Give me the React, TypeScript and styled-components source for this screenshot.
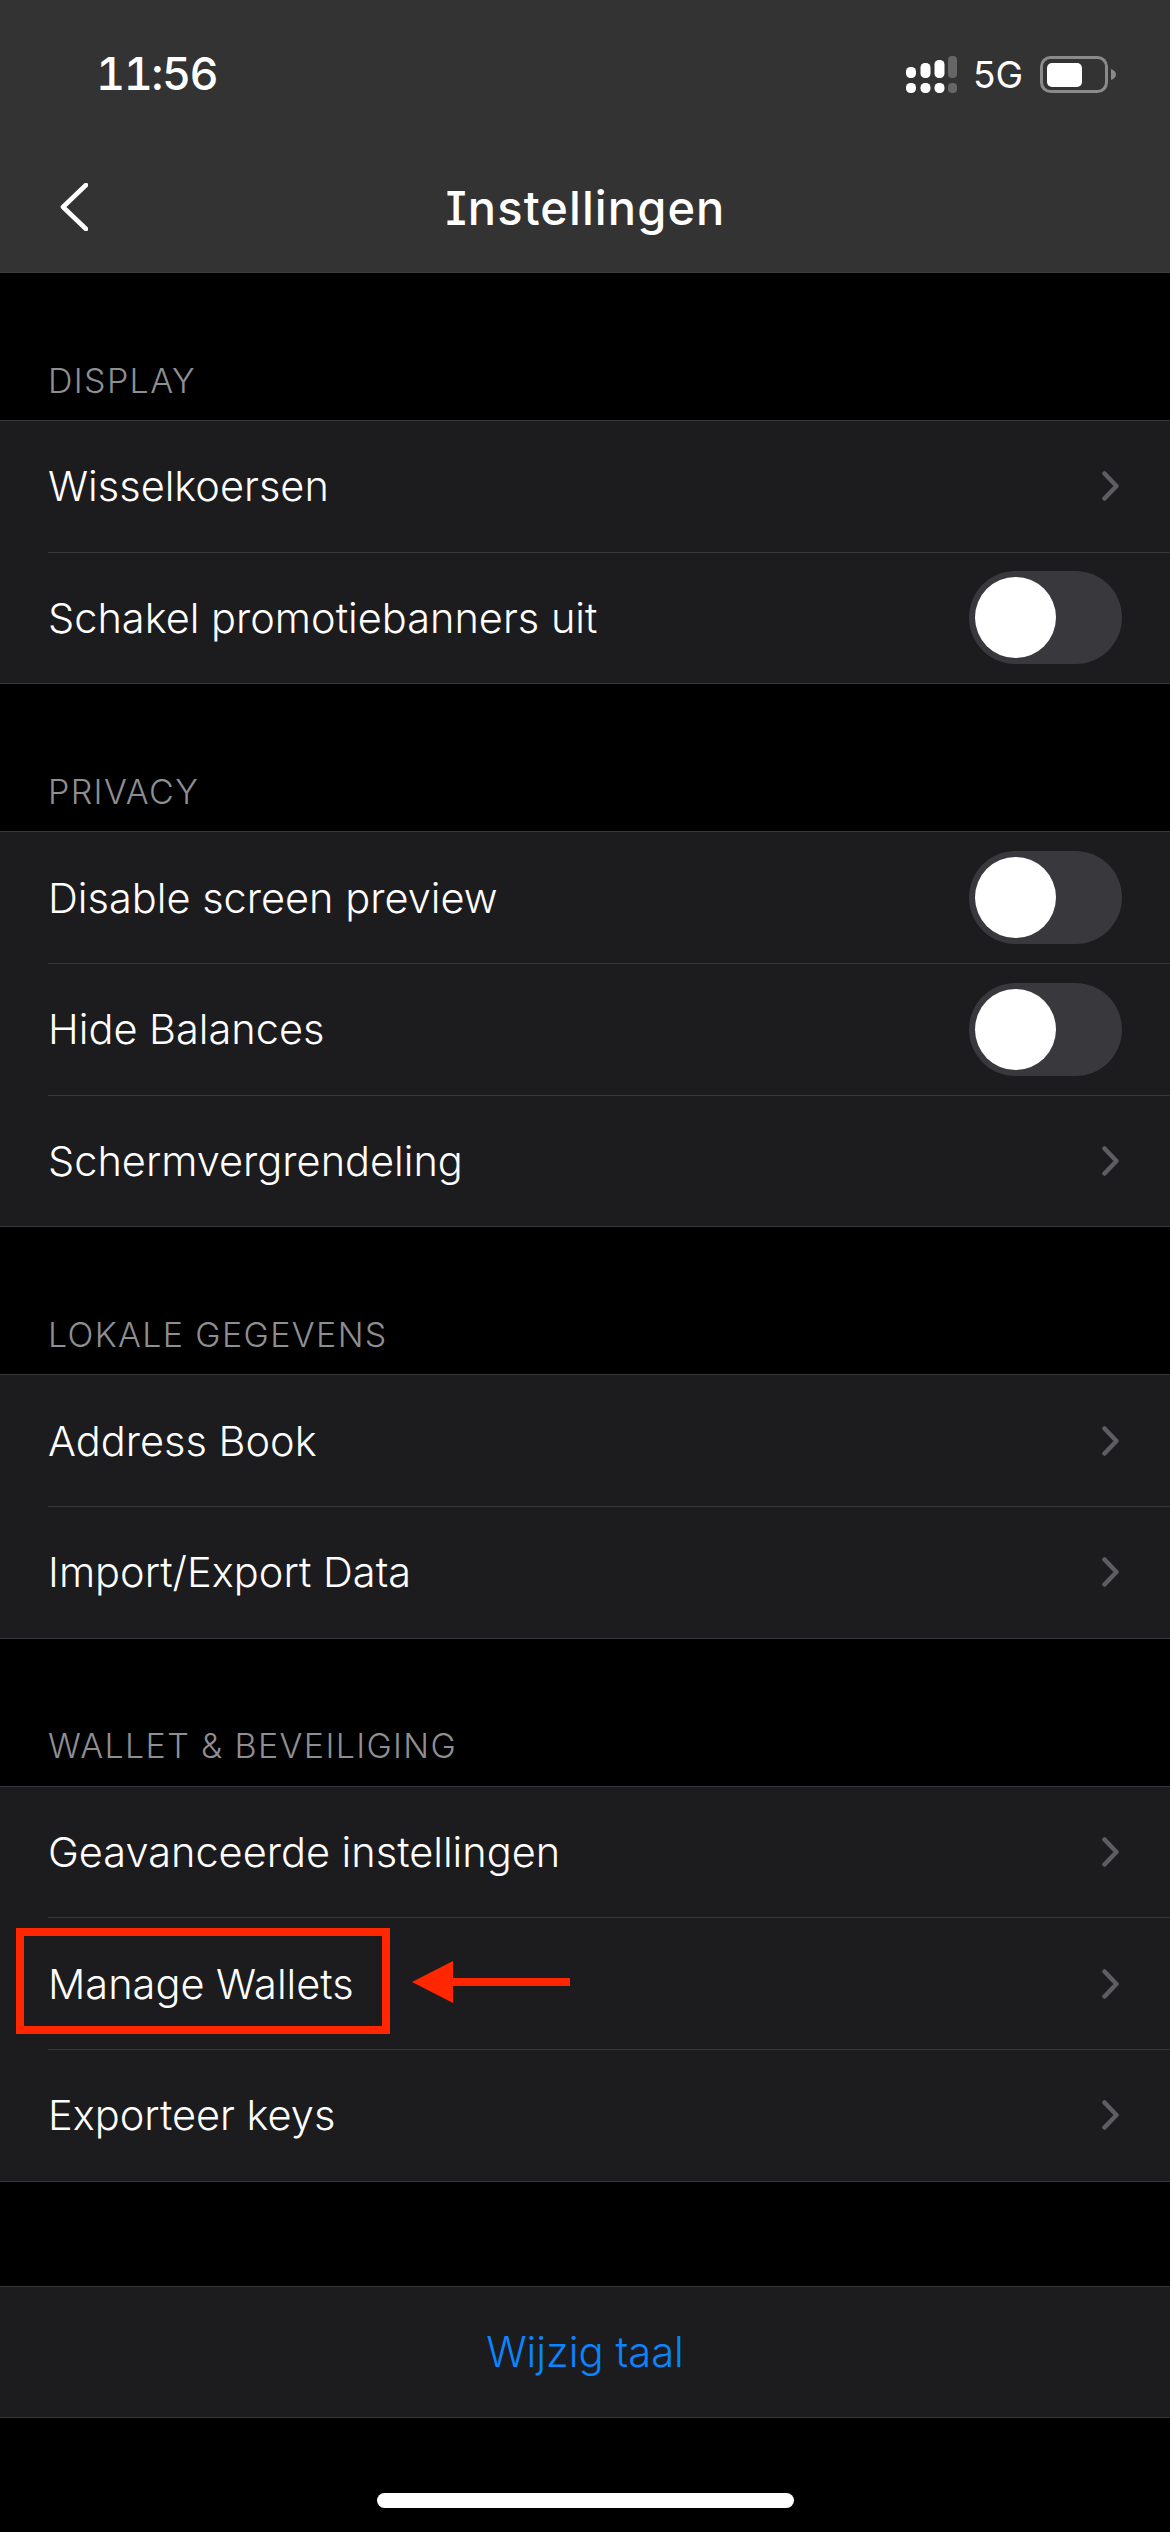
import React from "react";
import styled, { createGlobalStyle } from "styled-components";

const GlobalStyle = createGlobalStyle`
  html, body {
    margin: 0;
    padding: 0;
    background: #000;
  }
  body {
    font-family: "Inter", "Liberation Sans", sans-serif;
  }
`;

type RowData = { label: string; toggle?: boolean; highlighted?: boolean };
type SectionData = { title: string; rows: RowData[] };

const sections: SectionData[] = [
  {
    title: "DISPLAY",
    rows: [{ label: "Wisselkoersen" }, { label: "Schakel promotiebanners uit", toggle: true }],
  },
  {
    title: "PRIVACY",
    rows: [
      { label: "Disable screen preview", toggle: true },
      { label: "Hide Balances", toggle: true },
      { label: "Schermvergrendeling" },
    ],
  },
  {
    title: "LOKALE GEGEVENS",
    rows: [{ label: "Address Book" }, { label: "Import/Export Data" }],
  },
  {
    title: "WALLET & BEVEILIGING",
    rows: [
      { label: "Geavanceerde instellingen" },
      { label: "Manage Wallets", highlighted: true },
      { label: "Exporteer keys" },
    ],
  },
];

const SignalIcon = () => (
  <SignalSvg viewBox="0 0 52 38" width="52" height="38">
    <g fill="#fff">
      <rect x="0" y="11" width="10" height="11" rx="4.5" />
      <rect x="14.5" y="7" width="10" height="15" rx="4.5" />
      <rect x="28.5" y="4" width="10" height="18" rx="4.5" />
      <rect x="0" y="27" width="10" height="10" rx="4.5" />
      <rect x="14.5" y="27" width="10" height="10" rx="4.5" />
      <rect x="28.5" y="27" width="10" height="10" rx="4.5" />
    </g>
    <g fill="#666">
      <rect x="42" y="0" width="9" height="22" rx="4" />
      <rect x="42" y="27" width="9" height="10" rx="4" />
    </g>
  </SignalSvg>
);

const BatteryIcon = () => (
  <svg viewBox="0 0 76 38" width="76" height="38">
    <rect x="1.5" y="1.5" width="65" height="34" rx="9" fill="none" stroke="#8a8a8a" strokeWidth="3" />
    <rect x="7" y="7" width="35" height="24" rx="5" fill="#fff" />
    <path d="M71 13 C74 14 76 16 76 18.5 C76 21 74 23 71 24 Z" fill="#8a8a8a" />
  </svg>
);

const Chevron = () => (
  <ChevronSvg viewBox="0 0 17 30" width="17" height="30">
    <path d="M2.5 2.5 L14.5 15 L2.5 27.5" fill="none" stroke="#5e5e62" strokeWidth="4.5" strokeLinecap="round" strokeLinejoin="round" />
  </ChevronSvg>
);

const BackIcon = () => (
  <BackSvg viewBox="0 0 28 48" width="28" height="48">
    <path d="M26 2 L3 24 L26 46" fill="none" stroke="#fff" strokeWidth="4.6" strokeLinecap="round" strokeLinejoin="round" />
  </BackSvg>
);

const ArrowIcon = () => (
  <ArrowSvg viewBox="0 0 158 42" width="158" height="42">
    <path d="M0 21 L41 0 L41 17 L158 17 L158 25 L41 25 L41 42 Z" fill="#ff2600" />
  </ArrowSvg>
);

const App = () => {
  return (
    <Page>
      <GlobalStyle />
      <Header>
        <StatusBar>
          <Time>11:56</Time>
          <StatusIcons>
            <SignalIcon />
            <Network>5G</Network>
            <BatteryIcon />
          </StatusIcons>
        </StatusBar>
        <NavBar>
          <BackIcon />
          <Title>Instellingen</Title>
        </NavBar>
      </Header>

      {sections.map((section) => (
        <section key={section.title}>
          <SectionTitle>{section.title}</SectionTitle>
          <Group>
            {section.rows.map((row) => (
              <Row key={row.label}>
                {row.highlighted && <Highlight />}
                {row.highlighted && <ArrowIcon />}
                <RowInner>
                  <RowLabel>{row.label}</RowLabel>
                  {row.toggle ? (
                    <Toggle>
                      <Knob />
                    </Toggle>
                  ) : (
                    <Chevron />
                  )}
                </RowInner>
              </Row>
            ))}
          </Group>
        </section>
      ))}

      <Footer>
        <FooterLink>Wijzig taal</FooterLink>
      </Footer>
      <HomeArea>
        <HomeBar />
      </HomeArea>
    </Page>
  );
};

const Page = styled.div`
  width: 1170px;
  height: 2532px;
  overflow: hidden;
  background: #000;
  color: #fff;
`;

const Header = styled.header`
  height: 273px;
  background: #333333;
  border-bottom: 1px solid #3d3d3d;
  box-sizing: border-box;
`;

const StatusBar = styled.div`
  height: 150px;
  box-sizing: border-box;
  padding: 0 54px 0 96px;
  display: flex;
  justify-content: space-between;
  align-items: flex-start;
`;

const Time = styled.div`
  margin-top: 46px;
  font-size: 45px;
  line-height: 56px;
  font-weight: 500;
  font-feature-settings: "tnum" 1;
  letter-spacing: -1.5px;
`;

const StatusIcons = styled.div`
  margin-top: 56px;
  display: flex;
  align-items: center;
  height: 38px;
`;

const SignalSvg = styled.svg`
  margin-right: 15px;
`;

const Network = styled.div`
  font-size: 37px;
  line-height: 38px;
  margin-right: 17px;
  font-weight: 400;
`;

const NavBar = styled.div`
  position: relative;
  height: 122px;
  display: flex;
  align-items: center;
  justify-content: center;
`;

const BackSvg = styled.svg`
  position: absolute;
  left: 60px;
  top: 33px;
`;

const Title = styled.h1`
  margin: 0 0 0 1px;
  position: relative;
  top: -3px;
  font-size: 47px;
  line-height: 60px;
  font-weight: 500;
  font-feature-settings: "cv08" 1;
  letter-spacing: 1.1px;
`;

const SectionTitle = styled.h2`
  margin: 0;
  height: 147px;
  box-sizing: border-box;
  padding: 86.5px 0 0 48px;
  font-size: 34px;
  line-height: 42px;
  font-weight: 350;
  letter-spacing: 1.35px;
  color: #8e8e93;
`;

const Group = styled.div`
  background: #1c1c1e;
  border-bottom: 1.5px solid #38383a;
`;

const Row = styled.div`
  position: relative;
  height: 131.67px;
  padding-left: 48px;
  box-sizing: border-box;
  &:first-child {
    border-top: 1.5px solid #38383a;
  }
  &:not(:first-child) > div:last-child {
    border-top: 1.5px solid #38383a;
  }
`;

const RowInner = styled.div`
  height: 100%;
  box-sizing: border-box;
  padding-right: 48px;
  display: flex;
  align-items: center;
  justify-content: space-between;
`;

const RowLabel = styled.span`
  font-size: 41.5px;
  font-weight: 350;
  color: #fff;
`;

const ChevronSvg = styled.svg`
  margin-right: 3px;
`;

const Toggle = styled.div`
  width: 153px;
  height: 93px;
  border-radius: 47px;
  background: #39393d;
  display: flex;
  align-items: center;
  padding-left: 6px;
  box-sizing: border-box;
`;

const Knob = styled.div`
  width: 81px;
  height: 81px;
  border-radius: 50%;
  background: #fff;
`;

const Highlight = styled.div`
  position: absolute;
  left: 16px;
  top: 11px;
  width: 374px;
  height: 106px;
  box-sizing: border-box;
  border: 8px solid #ff2600;
`;

const ArrowSvg = styled.svg`
  position: absolute;
  left: 412px;
  top: 43.5px;
`;

const Footer = styled.div`
  margin-top: 104px;
  height: 132.5px;
  box-sizing: border-box;
  background: #1c1c1e;
  border-top: 1.5px solid #38383a;
  border-bottom: 1.5px solid #38383a;
  display: flex;
  align-items: center;
  justify-content: center;
`;

const FooterLink = styled.span`
  font-size: 41.8px;
  font-weight: 350;
  color: #0a84ff;
`;

const HomeArea = styled.div`
  padding-top: 75px;
  display: flex;
  justify-content: center;
`;

const HomeBar = styled.div`
  width: 417px;
  height: 15px;
  border-radius: 8px;
  background: #fff;
`;

export default App;
